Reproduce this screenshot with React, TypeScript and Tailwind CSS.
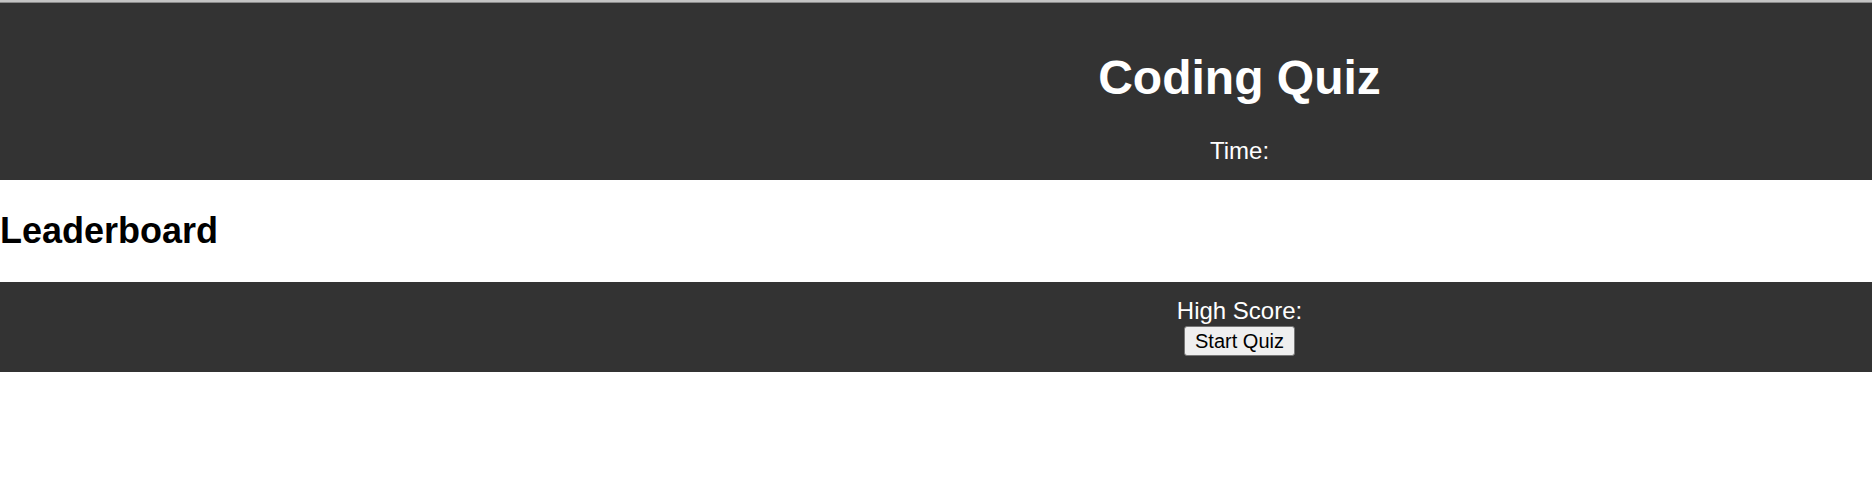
export default function App() {
  return (
    <div className="min-h-screen bg-white font-['Liberation_Sans',Arial,sans-serif] text-black">
      {/* window edge */}
      <div className="h-[2px] bg-[#c4c4c4]" />
      <div className="h-px bg-[#8a8a8a]" />

      {/* Header */}
      <header className="bg-[#333333] pl-[607px] pt-[47px] pb-[15px] text-center text-white">
        <h1 className="text-[48px] font-bold leading-[55px]">Coding Quiz</h1>
        <p className="mt-[32px] text-[24px] leading-[28px]">Time:</p>
      </header>

      {/* Leaderboard */}
      <section className="pt-[30px] pb-[31px]">
        <h2 className="text-[36px] font-bold leading-[41px]">Leaderboard</h2>
      </section>

      {/* Footer */}
      <footer className="flex flex-col items-center bg-[#333333] pl-[607px] pt-[15px] pb-[16px] text-white">
        <p className="text-[24px] leading-[28px]">High Score:</p>
        <button className="mt-px rounded-[3px] border border-[#767676] bg-[#efefef] px-[10px] py-[2px] text-[20px] leading-[24px] text-black">
          Start Quiz
        </button>
      </footer>
    </div>
  );
}
